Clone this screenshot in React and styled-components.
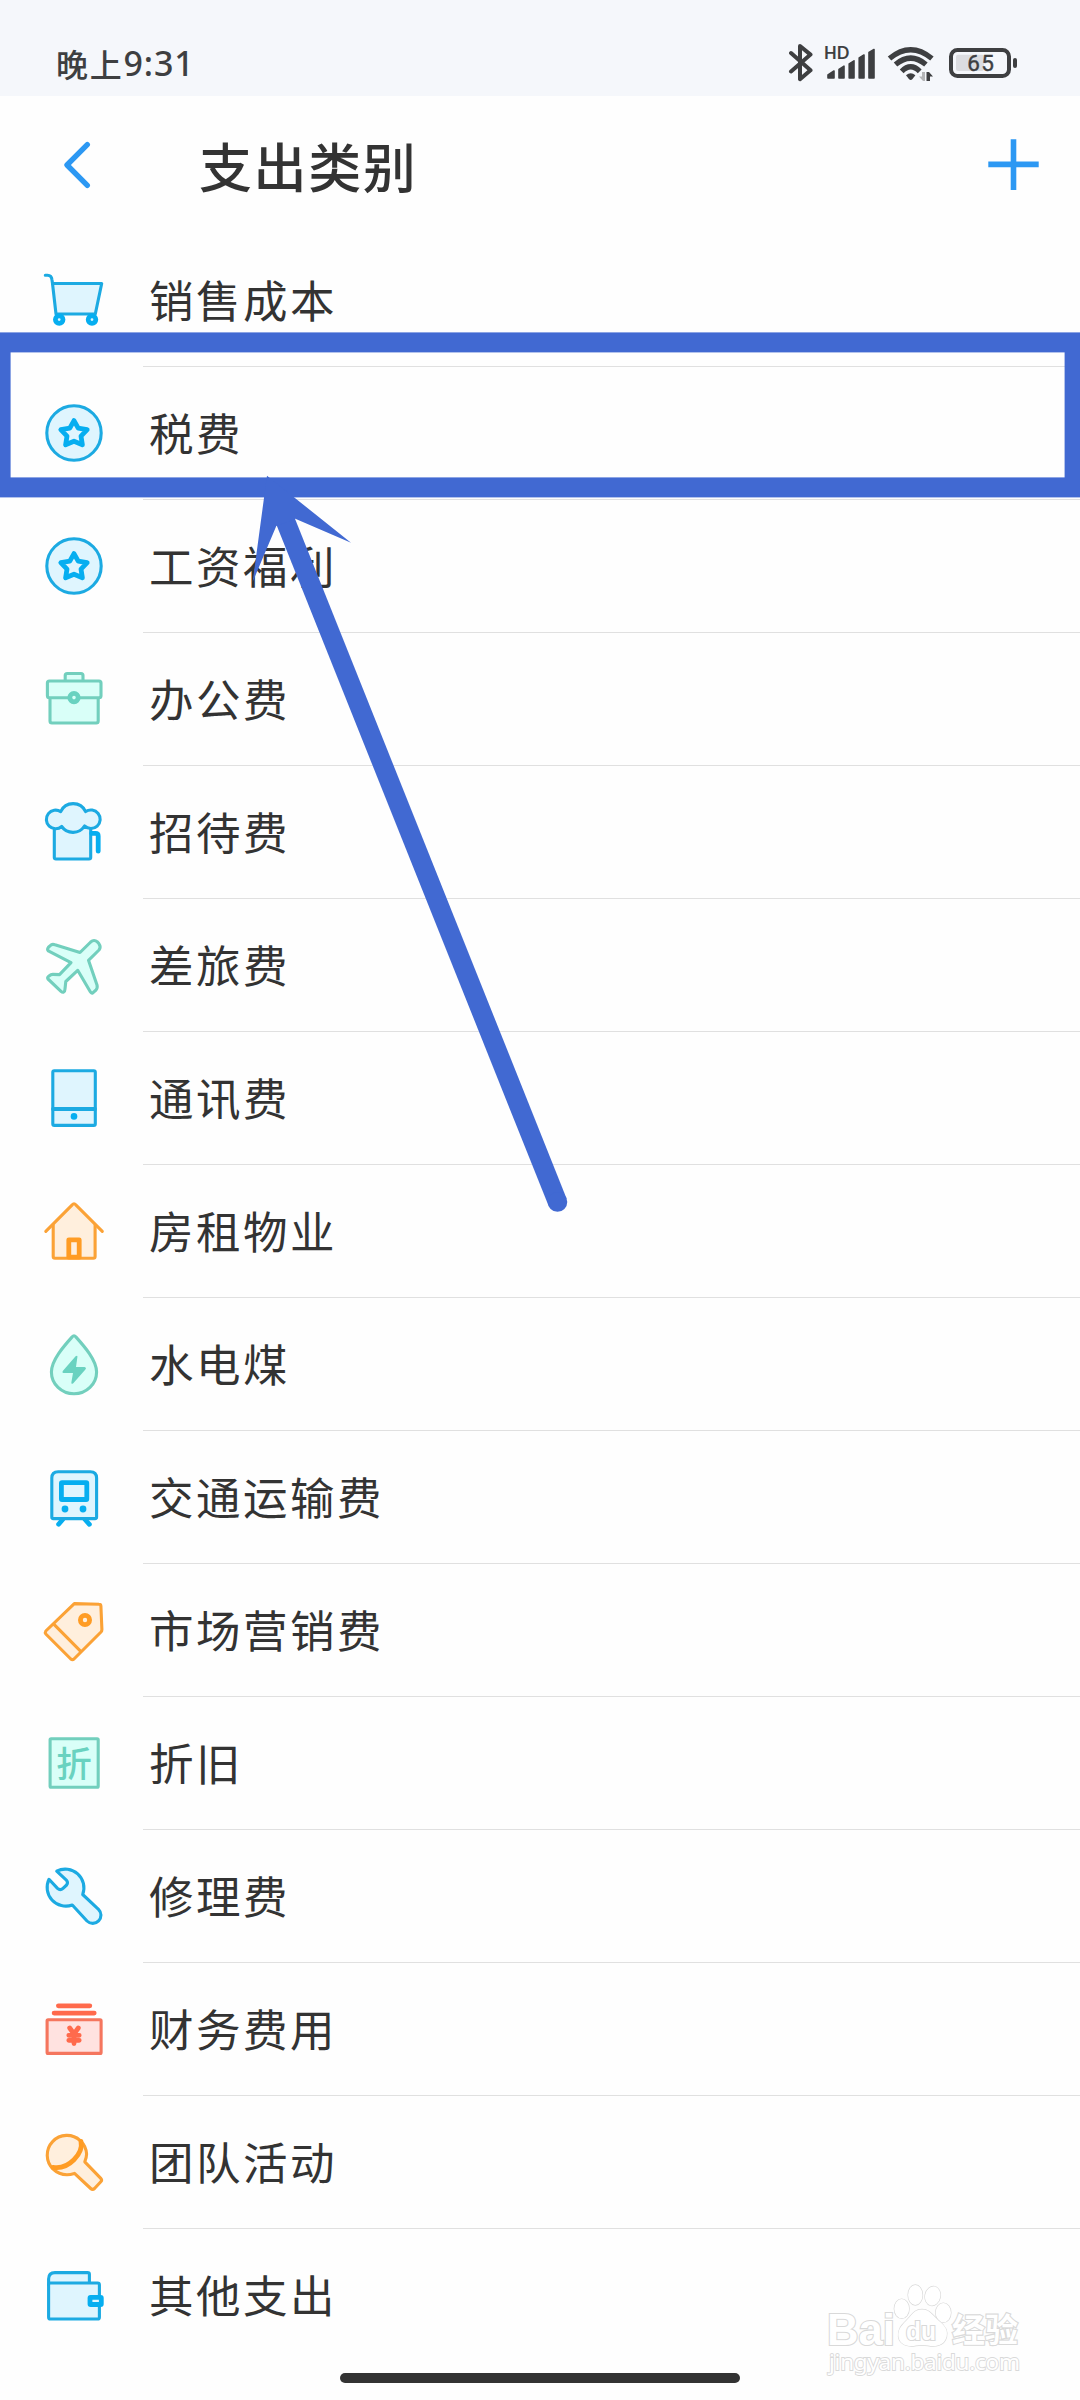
import styled, { createGlobalStyle } from "styled-components";

const GlobalStyle = createGlobalStyle`
  * {
    box-sizing: border-box;
  }
  body {
    margin: 0;
    background: #fefefe;
    font-family: "Noto Sans CJK SC", "Noto Sans", sans-serif;
    color: #333333;
  }
`;

const Screen = styled.div`
  position: relative;
  width: 1080px;
  height: 2400px;
  overflow: hidden;
`;

const StatusBar = styled.div`
  display: flex;
  justify-content: space-between;
  height: 96px;
  padding: 42px 62px 0 56px;
  background: #f5f7fb;
  color: #3e3f41;
`;

const Clock = styled.div`
  display: flex;
  height: 42px;
  line-height: 42px;
  font-size: 32px;
  font-weight: 500;
  letter-spacing: 1.8px;
`;

const ClockDigits = styled.span`
  font-family: "Noto Sans", sans-serif;
  font-size: 34px;
  letter-spacing: 0.8px;
`;

const StatusIcons = styled.div`
  display: flex;
  height: 40px;
`;

const StatusSvg = styled.svg`
  display: block;
  height: 40px;
  margin-left: ${({ $gap }) => $gap || 0}px;
`;

const Header = styled.header`
  display: flex;
  align-items: center;
  height: 138px;
  padding: 0 40px 0 60px;
`;

const Title = styled.h1`
  flex: 1;
  margin: 0 0 0 103px;
  font-size: 53px;
  font-weight: 500;
  line-height: 70px;
  letter-spacing: 1.6px;
`;

const List = styled.ul`
  margin: 0;
  padding: 0;
  list-style: none;
`;

const Row = styled.li`
  display: flex;
  align-items: center;
  height: 133px;
  padding-left: 34px;
`;

const Icon = styled.svg`
  display: block;
  flex: none;
  width: 80px;
  height: 81px;
  margin-right: 29px;
  fill: ${({ $tone }) => $tone.fill};
  stroke: ${({ $tone }) => $tone.line};
  stroke-width: 3.1;
  stroke-linecap: round;
  stroke-linejoin: round;

  .bold {
    stroke: ${({ $tone }) => $tone.bold};
    stroke-width: 4.8;
  }
  .solid {
    fill: ${({ $tone }) => $tone.bold};
    stroke: none;
  }
  .open {
    fill: none;
  }
  text {
    fill: ${({ $tone }) => $tone.bold};
    stroke: none;
    text-anchor: middle;
  }
`;

const Label = styled.div`
  flex: 1;
  height: 133px;
  padding-left: 6px;
  border-bottom: 1px solid ${({ $last }) => ($last ? "transparent" : "#e0e0e0")};
  line-height: 130px;
  font-size: 44.5px;
  letter-spacing: 2.5px;
`;

const Footer = styled.footer`
  display: flex;
  justify-content: center;
  padding-top: 11px;
`;

const HomeBar = styled.div`
  width: 400px;
  height: 10px;
  border-radius: 5px;
  background: #333333;
`;

const Annotation = styled.svg`
  position: absolute;
  top: 0;
  left: 0;
`;

const Watermark = styled.svg`
  position: absolute;
  left: 820px;
  top: 2280px;
  fill: #ffffff;
  stroke: #d9d9d9;
  stroke-width: 2.2;
  paint-order: stroke;
`;

const blue = { line: "#1caae2", bold: "#06aef0", fill: "#dff5fe" };
const green = { line: "#72cfbd", bold: "#69d2c0", fill: "#d9fff8" };
const orange = { line: "#fba236", bold: "#ff9c24", fill: "#ffefdd" };
const red = { line: "#f5765e", bold: "#ff6a4c", fill: "#ffe2e0" };

const star = (
  <>
    <circle cx="40" cy="40" r="27.2" />
    <path
      className="bold"
      d="M40 27.6 44.2 35.2 53.2 36.7 47 43.2 48.4 51.8 40 48.2 31.6 51.8 33 43.2 26.8 36.7 35.8 35.2Z"
    />
  </>
);

const categories = [
  {
    name: "销售成本",
    tone: blue,
    icon: (
      <>
        <path d="M18.5 23.5H67.7L61.3 54H22Z" />
        <path className="open" d="M11.3 15.2H13.5Q17.6 15.2 18 20L18.5 23.5" />
        <circle className="bold" cx="25.2" cy="59.6" r="3.8" />
        <circle className="bold" cx="58" cy="59.6" r="3.8" />
      </>
    ),
  },
  { name: "税费", tone: blue, icon: star },
  { name: "工资福利", tone: blue, icon: star },
  {
    name: "办公费",
    tone: green,
    icon: (
      <>
        <rect x="31.2" y="14.5" width="17.8" height="10" rx="2" />
        <rect x="16" y="36" width="48.2" height="28" rx="2" />
        <rect x="13.4" y="22" width="53.6" height="16.7" rx="2" />
        <circle className="bold" cx="40" cy="38.6" r="4.2" />
      </>
    ),
  },
  {
    name: "招待费",
    tone: blue,
    icon: (
      <>
        <path d="M20.3 34V65.5Q20.3 67 22 67H55Q56.7 67 56.7 65.5V34Z" />
        <path className="bold open" d="M57.7 41.3H61.5Q64.2 41.3 64.2 44V59.2" />
        <path d="M27.7 34.5A9.3 9.3 0 1 1 26.7 19.6A13.7 13.7 0 0 1 51.6 19.6A9.3 9.3 0 1 1 50.5 34A13.7 13.7 0 0 1 27.7 34.5Z" />
      </>
    ),
  },
  {
    name: "差旅费",
    tone: green,
    icon: (
      <path d="M46 27.5 56.7 17Q60 14 63.5 17L65 18.8Q67.3 22 65 25L54.5 35.3 63 60Q63.8 63 62 65L58.8 67.8Q57.4 68.6 56.3 66.8L43.7 45.3 31.8 56.5 31 64Q31 66.5 29.5 67.2Q28.4 67.6 27 66.3L14 54Q13 52.6 15 51Q17 49.3 19 49.4L25.5 49.6 37 37.6 14.3 25.8Q12.9 24.4 14.4 22.3L17.2 19.9Q18.7 19 21 19.8Z" />
    ),
  },
  {
    name: "通讯费",
    tone: blue,
    icon: (
      <>
        <rect x="18.8" y="12.8" width="42.5" height="54.6" rx="1.5" />
        <path d="M19 51H61" strokeWidth="3.8" />
        <circle className="solid" cx="40" cy="58.4" r="3.3" />
      </>
    ),
  },
  {
    name: "房租物业",
    tone: orange,
    icon: (
      <>
        <path
          d="M19.2 34V65.5Q19.2 67.2 21 67.2H59.3Q61.1 67.2 61.1 65.5V34L42 13.5Q40 11.5 38 13.5Z"
          stroke="none"
        />
        <path className="open" d="M19.2 34V65.5Q19.2 67.2 21 67.2H59.3Q61.1 67.2 61.1 65.5V34" />
        <path className="open" d="M11.8 40.3 38.2 13.8Q40 11.8 41.8 13.8L68.3 40.3" />
        <rect className="bold" x="34.8" y="48.8" width="10.4" height="17.4" />
      </>
    ),
  },
  {
    name: "水电煤",
    tone: green,
    icon: (
      <>
        <path d="M38.2 12.8Q40 10.6 41.8 12.8C50 22 62.6 36 62.6 48A22.6 21.8 0 0 1 17.4 48C17.4 36 30 22 38.2 12.8Z" />
        <path
          className="solid"
          d="M41.6 32.3Q43.7 30.7 43.4 33L42 43H50.5Q53 43.6 51.2 45.8L39.3 59.2Q37 60.8 37.4 58.3L39 49H29.6Q27.5 48.4 29.2 46.4Z"
        />
      </>
    ),
  },
  {
    name: "交通运输费",
    tone: blue,
    icon: (
      <>
        <path className="bold" d="M28.7 62.5 24.6 67.3M51 62.5 55.4 67.3" />
        <path d="M17.8 60V21Q17.8 14.7 24.2 14.7H56.2Q62.6 14.7 62.6 21V60Q62.6 61.6 61 61.6H19.3Q17.8 61.6 17.8 60Z" />
        <rect className="bold" x="27.4" y="25.7" width="25.4" height="16.8" rx="0.6" />
        <circle className="solid" cx="31" cy="52" r="3.4" />
        <circle className="solid" cx="49" cy="52" r="3.4" />
      </>
    ),
  },
  {
    name: "市场营销费",
    tone: orange,
    icon: (
      <>
        <path d="M40.3 13.6 65 14.2Q66.9 14.2 66.9 16L67.9 39.5Q67.9 41 67 42L40 69Q38.4 70.3 36.8 69L11.8 44Q10.8 42.5 11.8 41Z" />
        <path d="M20 34.3 46 60.7" />
        <circle className="bold" cx="51" cy="30" r="4.6" />
      </>
    ),
  },
  {
    name: "折旧",
    tone: green,
    icon: (
      <>
        <rect x="16.1" y="15.8" width="48.1" height="48.4" rx="1" />
        <text x="40" y="54" fontSize="35.5" fontWeight="500">
          折
        </text>
      </>
    ),
  },
  {
    name: "修理费",
    tone: blue,
    icon: (
      <path d="M22.7 15.2A18.7 18.7 0 0 1 48.7 38.5L64.5 53.3A8.2 8.2 0 0 1 53 65L38.3 49A18.7 18.7 0 0 1 15 23.3L23.5 32.4Q26.3 35 29 32.4L32.6 29Q34.4 26.6 32.6 24.4Z" />
    ),
  },
  {
    name: "财务费用",
    tone: red,
    icon: (
      <>
        <path className="bold" d="M24.4 16.8H55.8M20.1 24.1H60.2" />
        <rect x="13.1" y="30.8" width="54" height="33.6" rx="1" />
        <path className="bold" d="M35.7 39 40 45 44.3 39M34.8 46.3H45.2M34.8 51.3H45.2M40 45V54.6" />
      </>
    ),
  },
  {
    name: "团队活动",
    tone: orange,
    icon: (
      <>
        <path d="M50.8 39.8 66.8 56.3Q68.4 58 66.8 59.7L60.5 66.5Q58.6 68.3 56.7 66.5L40.5 51.4Q36 52.8 33 52.8A19.7 19.7 0 1 1 52.6 32Q52.6 35 50.8 39.8Z" />
        <path className="bold open" d="M47 19.5C49.5 31 35 48 19 45.3" />
      </>
    ),
  },
  {
    name: "其他支出",
    tone: blue,
    icon: (
      <>
        <path d="M14.6 30V24Q14.6 17.6 21 17.6H53.5Q55.4 17.6 55.4 19.3V30Z" />
        <rect x="14.6" y="28" width="50.8" height="36" rx="1.8" />
        <rect className="bold" x="56" y="42.3" width="11.3" height="7.2" rx="0.6" />
      </>
    ),
  },
];

const Bluetooth = () => (
  <StatusSvg width="26" viewBox="0 0 26 40">
    <path
      d="M3 11 22.5 28.3 12 37.2V4L22.5 12.6 3 29.5"
      fill="none"
      stroke="#3e3f41"
      strokeWidth="4"
      strokeLinecap="round"
      strokeLinejoin="round"
    />
  </StatusSvg>
);

const Signal = () => (
  <StatusSvg width="52" viewBox="0 0 52 40" $gap={10}>
    <text x="0" y="17" fontFamily="Lato" fontSize="16.5" fontWeight="700" fill="#3e3f41">
      HD
    </text>
    <path
      d="M4 36V33L10 29V36ZM15 36V27.5L20 24.2V36ZM25.2 36V22L30 18.8V36ZM35.2 36V16L40 13V36ZM45 36V10.5L50 7.5V36Z"
      fill="#3e3f41"
      stroke="#3e3f41"
      strokeWidth="1.6"
      strokeLinejoin="round"
    />
  </StatusSvg>
);

const Wifi = () => (
  <StatusSvg width="48" viewBox="0 0 48 40" $gap={11}>
    <g fill="none" stroke="#3e3f41" strokeWidth="5.4">
      <path d="M2.5 16.5Q23.7-1 44.9 16.5" />
      <path d="M8.5 22.5Q23.7 9.8 38.9 22.5" />
      <path d="M14.7 29.3Q23.7 20.3 32.7 29.3" />
    </g>
    <path d="M19 33.3Q23.7 29 28.4 33.3L25.5 37Q23.7 38.8 21.9 37Z" fill="#3e3f41" />
    <path d="M38 30V39H36L32 34.5H35V30Z" fill="#b4b5b7" />
    <path d="M39.5 39V30H42L46 34.5H43V39Z" fill="#3e3f41" />
  </StatusSvg>
);

const Battery = () => (
  <StatusSvg width="70" viewBox="0 0 70 40" $gap={13}>
    <rect x="8" y="12.7" width="28" height="16.3" rx="2" fill="#dcdde1" />
    <rect x="3" y="8" width="58" height="26" rx="6.5" fill="none" stroke="#3e3f41" strokeWidth="4" />
    <rect x="65" y="16" width="4" height="10" rx="2" fill="#3e3f41" />
    <text x="33.2" y="29.4" textAnchor="middle" fontFamily="Roboto" fontSize="22.5" letterSpacing="1.4" fill="#3e3f41" stroke="#3e3f41" strokeWidth="0.4">
      65
    </text>
  </StatusSvg>
);

const BackIcon = () => (
  <svg width="36" height="50" viewBox="0 0 36 50" fill="none" stroke="#2c98f3">
    <path d="M27.3 4.6 7 25 27.3 45.4" strokeWidth="5.4" strokeLinecap="round" strokeLinejoin="round" />
  </svg>
);

const AddIcon = () => (
  <svg width="53" height="52" viewBox="0 0 53 52" fill="none" stroke="#2c98f3">
    <path d="M1.3 25.4H51.7M26.5 0.2V51" strokeWidth="5.6" />
  </svg>
);

export default function App() {
  return (
    <>
      <GlobalStyle />
      <Screen>
        <StatusBar>
          <Clock>
            晚上<ClockDigits>9:31</ClockDigits>
          </Clock>
          <StatusIcons>
            <Bluetooth />
            <Signal />
            <Wifi />
            <Battery />
          </StatusIcons>
        </StatusBar>

        <Header>
          <BackIcon />
          <Title>支出类别</Title>
          <AddIcon />
        </Header>

        <List>
          {categories.map(({ name, tone, icon }, i) => (
            <Row key={name}>
              <Icon viewBox="0 0 80 81" $tone={tone}>
                {icon}
              </Icon>
              <Label $last={i === categories.length - 1}>{name}</Label>
            </Row>
          ))}
        </List>

        <Footer>
          <HomeBar />
        </Footer>

        <Watermark width="210" height="105" viewBox="0 0 210 105">
          <text x="7" y="64.5" fontFamily="Liberation Sans" fontSize="44" fontWeight="700" textLength="68" lengthAdjust="spacingAndGlyphs">
            Bai
          </text>
          <g strokeWidth="1.3">
            <ellipse cx="81.7" cy="28.7" rx="7.4" ry="9.6" />
            <ellipse cx="95.3" cy="15" rx="7.2" ry="10" />
            <ellipse cx="112.7" cy="16" rx="7.6" ry="9.6" transform="rotate(12 112.7 16)" />
            <ellipse cx="123.3" cy="32.7" rx="7.6" ry="9.6" />
            <path d="M102 29.5C110 29.5 113 36 119 41C126 46.5 128 51 126.5 57C124 66 115 67 108 65.5Q102 64.500 96 65.5C89 67 80 65.5 78.500 57C77.5 50 81 46 86 41C92 35 94 29.5 102 29.5Z" />
          </g>
          <text x="86" y="59.5" fontFamily="Liberation Sans" fontSize="25" fontWeight="700" textLength="30" lengthAdjust="spacingAndGlyphs">
            du
          </text>
          <text x="132" y="62" fontFamily="Noto Sans CJK SC" fontSize="33" fontWeight="700">
            经验
          </text>
          <text x="9" y="90" fontFamily="Noto Sans" fontSize="22.5" strokeWidth="1.8" textLength="191">
            jingyan.baidu.com
          </text>
        </Watermark>

        <Annotation width="1080" height="2400" viewBox="0 0 1080 2400">
          <rect x="0.6" y="342.4" width="1074" height="145" fill="none" stroke="#4169d2" strokeWidth="20" />
          <path d="M279 505 557.5 1202" stroke="#4169d2" strokeWidth="19.5" />
          <circle cx="557.5" cy="1202" r="9.75" fill="#4169d2" />
          <path d="M267 475.7 351 542.7 295.3 518.7 276.3 526 252.7 581.7Z" fill="#4169d2" />
        </Annotation>
      </Screen>
    </>
  );
}
